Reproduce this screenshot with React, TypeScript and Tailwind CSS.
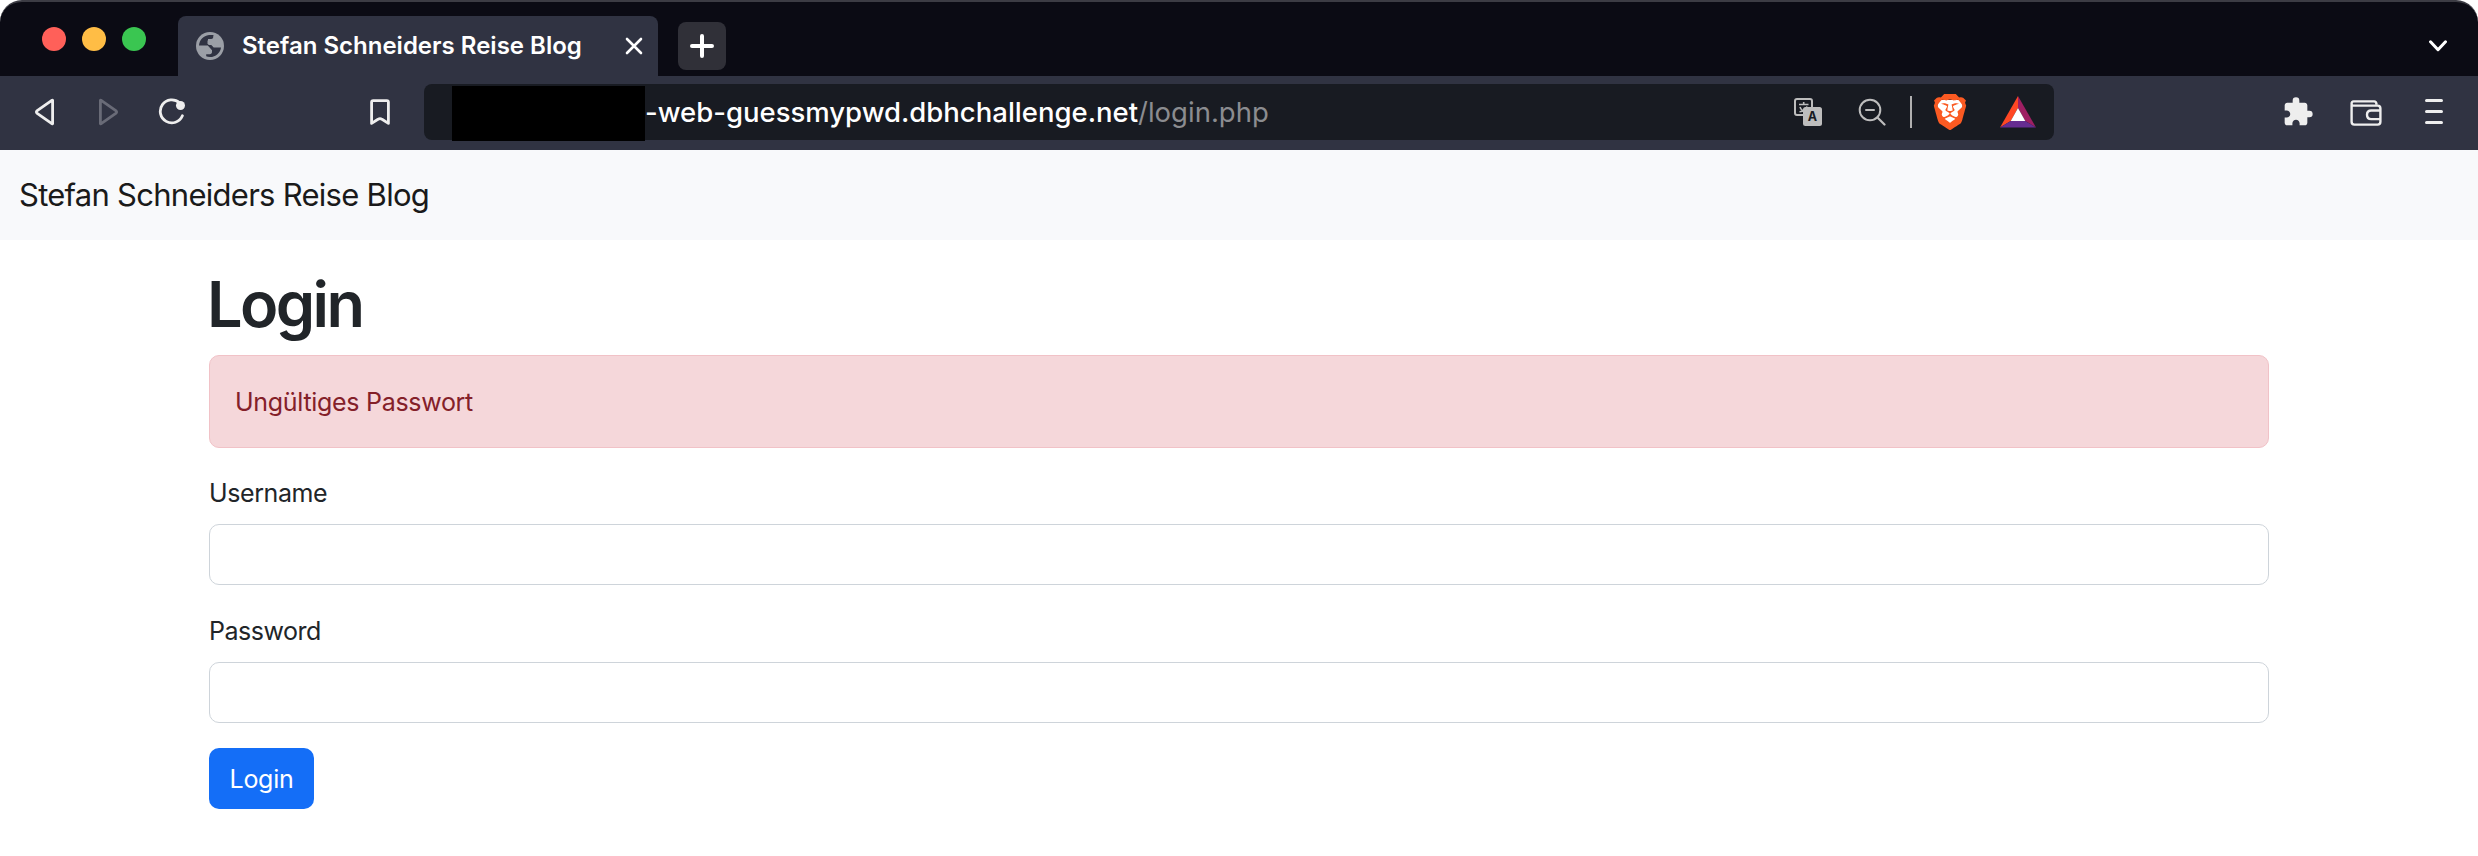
import { MdExtension } from "react-icons/md";
import { SiBrave } from "react-icons/si";

function GlobeIcon() {
  return (
    <svg width="28" height="28" viewBox="0 0 28 28" className="shrink-0">
      <circle cx="14" cy="14" r="14" fill="#9b9fa6" />
      <path
        d="M3 13.6C3.2 8.4 7.4 3.6 13 3h4.5v1.6c0 1.400-.9 2.400-2.300 2.400H12v4.400c0 .9.6 1.600 1.500 1.600h1.800l2.400 2.400H25C24.400 20.600 19.800 25 14 25c-1.500 0-2.700-.2-3.800-.7v-2h3.600c1.300 0 2.200-.9 2.200-2.200v-1.800L11.800 13.600Z"
        fill="#303342"
      />
      <path d="M11.500 8.500h3.500c1.500 0 2.500-1 2.500-2.500V3.500L23 8l2 5.500h-4.500L18.500 15 15 12h-3.500Z" fill="#9b9fa6" />
    </svg>
  );
}

function TranslateIcon() {
  return (
    <svg width="28" height="28" viewBox="0 0 28 28" className="shrink-0">
      <rect x="1" y="1" width="17" height="16" rx="2" fill="none" stroke="#bdbdbd" strokeWidth="2" />
      <path d="M5 6.500h9.500M9.700 4v2.500M6 9c.8 2.500 3 4.500 6.500 4.800M13 8.500c-.6 2.500-3 4.800-7.500 5.300" fill="none" stroke="#bdbdbd" strokeWidth="1.600" />
      <rect x="9" y="9" width="19" height="19" rx="2.500" fill="#bdbdbd" />
      <text x="18.400" y="23" textAnchor="middle" className="font-['Inter',sans-serif] text-[12.5px] font-bold" fill="#181b22">
        A
      </text>
    </svg>
  );
}

function Field({ label, type, className }: { label: string; type: string; className: string }) {
  return (
    <label className={`flex flex-col gap-3 ${className}`}>
      <span className={`h-[38px] text-[25px] leading-[38px] ${type === "password" ? "tracking-[-0.5px]" : "tracking-[-0.4px]"}`}>
        {label}
      </span>
      <input type={type} className="h-[61px] w-full rounded-[10px] border border-[#ced4da] bg-white px-5 text-[25px]" />
    </label>
  );
}

export default function App() {
  return (
    <div className="h-[856px] w-[2478px] overflow-hidden bg-white font-['Inter',sans-serif] text-[#212529]">
      <header className="overflow-hidden rounded-t-[22px] border-t-2 border-[#3c3c44] bg-[#0b0b14]">
        <div className="flex h-[74px] items-end">
          <div className="flex gap-4 self-start pt-[25px] pl-[42px]">
            <span className="size-6 rounded-full bg-[#ff6059]" />
            <span className="size-6 rounded-full bg-[#ffbd45]" />
            <span className="size-6 rounded-full bg-[#3ac651]" />
          </div>
          <div className="ml-8 flex h-[60px] w-[480px] items-center rounded-t-lg bg-[#303342] pl-[18px]">
            <GlobeIcon />
            <span className="ml-[18px] w-[378px] text-[24px] leading-8 font-semibold whitespace-nowrap text-white">
              Stefan Schneiders Reise Blog
            </span>
            <svg width="18" height="18" viewBox="0 0 18 18" className="ml-[5px]" stroke="#fff" strokeWidth="2.600" strokeLinecap="round">
              <path d="M2 2l14 14M16 2L2 16" />
            </svg>
          </div>
          <button className="mb-1.5 ml-5 flex size-12 items-center justify-center rounded-lg bg-[#303038]">
            <svg width="24" height="24" viewBox="0 0 24 24" stroke="#fff" strokeWidth="4" strokeLinecap="round">
              <path d="M12 2v20M2 12h20" />
            </svg>
          </button>
          <svg width="20" height="12" viewBox="0 0 20 12" className="mr-[30px] mb-6 ml-auto" fill="none" stroke="#fff" strokeWidth="3" strokeLinecap="round" strokeLinejoin="round">
            <path d="M2.500 1.800L10 9.700l7.500-7.900" />
          </svg>
        </div>

        <div className="flex h-[74px] bg-[#303342]">
          <nav className="flex h-[72px] w-[424px] items-center pl-[34px]">
            <svg width="22" height="28" viewBox="0 0 22 28" fill="none" stroke="#eee" strokeWidth="2.800" strokeLinejoin="round">
              <path d="M18.600 2.400v23.200q0 .4-.4.200L3.200 15.300q-1.700-1.300 0-2.600L18.200 2.200q.4-.2.400.2Z" />
            </svg>
            <svg width="22" height="28" viewBox="0 0 22 28" className="ml-[41px]" fill="none" stroke="#696b77" strokeWidth="2.800" strokeLinejoin="round">
              <path d="M3.400 2.400v23.200q0 .4.400.2l15-10.500q1.700-1.300 0-2.600L3.800 2.200q-.4-.2-.4.2Z" />
            </svg>
            <svg width="28" height="28" viewBox="0 0 28 28" className="ml-[39px]" fill="none" stroke="#eee" strokeWidth="2.800" strokeLinecap="round">
              <path d="M21.500 4.800A11.500 11.500 0 1 0 24.400 17.800" />
              <circle cx="22.500" cy="7.500" r="4.500" fill="#eee" stroke="none" />
            </svg>
            <svg width="20" height="28" viewBox="0 0 20 28" className="ml-[184px]" fill="none" stroke="#eee" strokeWidth="2.800" strokeLinejoin="round">
              <path d="M1.600 4.200q0-1.600 1.600-1.600h13.600q1.600 0 1.600 1.600v21.200L12 21.300q-2-1.400-4 0l-6.400 4.100Z" />
            </svg>
          </nav>

          <div className="mt-2 flex h-14 w-[1630px] items-center rounded-lg bg-[#181b22]">
            <span className="mt-[2px] ml-7 h-[55px] w-[193px] shrink-0 self-start bg-black" />
            <span className="text-[27.5px] leading-[56px] font-medium whitespace-nowrap text-white">
              -web-guessmypwd.dbhchallenge.net<span className="font-normal text-[#8b8c90]">/login.php</span>
            </span>
            <div className="ml-auto flex items-center pr-[18px]">
              <TranslateIcon />
              <svg width="28" height="28" viewBox="0 0 28 28" className="ml-[36px]" fill="none" stroke="#bdbdbd" strokeWidth="2" strokeLinecap="round">
                <circle cx="12" cy="12" r="10.300" />
                <path d="M8 12h8" />
                <path d="M19.500 19.500l7 7" strokeWidth="2.200" />
              </svg>
              <span className="ml-6 h-8 w-0.5 bg-[#b0b0b0]" />
              <svg width="38" height="36" viewBox="0 0 24 24" preserveAspectRatio="none" className="ml-[19px]">
                <path d="M5 4h14l1 4-2.500 7-5.500 5-5.500-5L4 8Z" fill="#fff" />
                <SiBrave size={24} color="#fb5a22" />
              </svg>
              <svg width="36" height="32" viewBox="0 0 36 32" className="ml-[31px]">
                <path d="M18 0L0 31.500 10.700 25 18 12Z" fill="#ff4724" />
                <path d="M18 0l18 31.500L25.300 25 18 12Z" fill="#9e1f63" />
                <path d="M0 31.500h36L25.300 25H10.700Z" fill="#662d91" />
                <path d="M18 12l7.300 13H10.700Z" fill="#fff" />
              </svg>
            </div>
          </div>

          <div className="ml-auto flex h-[72px] items-center pr-[35px]">
            <MdExtension size={32} color="#eee" />
            <svg width="32" height="26" viewBox="0 0 32 26" className="mt-0.5 ml-[36px]" fill="none" stroke="#eee" strokeWidth="2.400">
              <path d="M1.600 4.500v17.300q0 2.800 2.800 2.800h23.200q2.800 0 2.800-2.800V8.400q0-2.800-2.800-2.800H3q-1.400 0-1.400-2 0-2.200 2-2.200h20.600q2 0 2.400 3" />
              <path d="M30.400 10.500H21.200q-4.200 0-4.200 4.300t4.200 4.300h9.200" />
            </svg>
            <svg width="18" height="26" viewBox="0 0 18 26" className="ml-[43px]" stroke="#eee" strokeWidth="3" strokeLinecap="round">
              <path d="M1.500 1.500h15M1.500 12.500h15M1.500 23.500h15" />
            </svg>
          </div>
        </div>
      </header>

      <div className="flex h-[90px] items-center bg-[#f8f9fb] pt-px pl-[19px] text-[31px] tracking-[-0.73px] text-[#1a1a1a]">
        Stefan Schneiders Reise Blog
      </div>

      <main className="mx-[209px] flex flex-col items-stretch pt-[26px]">
        <h1 className="-ml-[2px] h-[77px] text-[63px] leading-[77px] font-semibold tracking-[-2.6px]">Login</h1>
        <div className="mt-3 flex h-[93px] items-center rounded-[10px] border border-[#f1c2c7] bg-[#f5d7da] pt-0.5 pl-[25px] text-[25px] tracking-[-0.3px] text-[#842029]">
          Ungültiges Passwort
        </div>
        <Field label="Username" type="text" className="mt-[26px]" />
        <Field label="Password" type="password" className="mt-[27px]" />
        <button className="mt-[25px] flex h-[61px] w-[105px] items-center justify-center rounded-[10px] bg-[#146ef7] pt-0.5 text-[25px] tracking-[-0.3px] text-white">
          Login
        </button>
      </main>
    </div>
  );
}
